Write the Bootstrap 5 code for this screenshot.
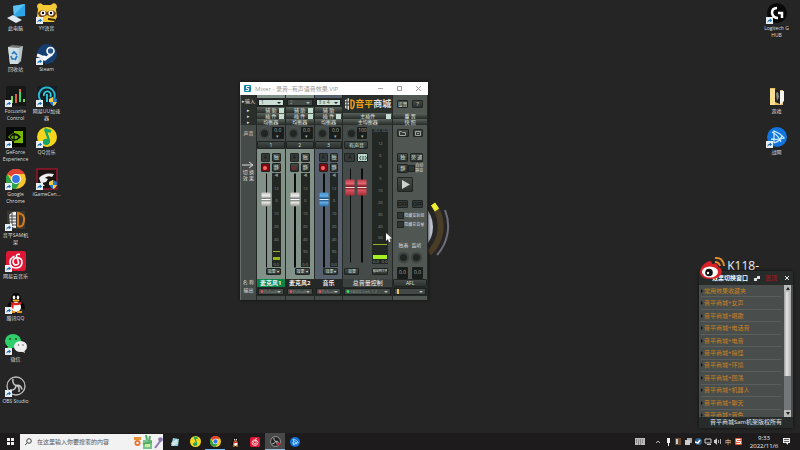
<!DOCTYPE html>
<html>
<head>
<meta charset="utf-8">
<meta name="viewport" content="width=device-width, initial-scale=1">
<title>Desktop</title>
<link href="https://cdn.jsdelivr.net/npm/bootstrap@5.3.0/dist/css/bootstrap.min.css" rel="stylesheet">
<style>
body{background:#252525;color:#ddd;font:5px/6px "Open Sans","Noto Sans CJK SC",sans-serif;height:100vh}
svg{display:block;flex:none}
button,select,input{font:inherit;line-height:inherit;color:inherit;border:0;padding:0;margin:0;border-radius:0;min-width:0}
/* desktop shortcuts */
.shortcuts{display:grid;grid-auto-flow:column;grid-template-rows:repeat(10,1fr);grid-auto-columns:31px;height:416px;padding-top:2px}
.shortcut{color:#e4e4e4;text-decoration:none;text-align:center;display:flex;flex-direction:column;align-items:center;gap:1px;font-size:5px;line-height:7px;width:31px}
.shortcut svg{width:22px;height:22px}
.shortcut span{text-shadow:0 0 1px #000;width:35px;flex:none}
.dial{position:absolute;left:360px;top:183px;width:90px;height:90px}
/* mixer */
.mixer{position:absolute;left:240px;top:82px;width:188px;background:#454b48;box-shadow:0 0 3px #111}
.titlebar{height:13px;background:#fff;color:#999;font-size:6px}
.titlebar button{background:none;width:19px;height:13px;display:flex;justify-content:center;align-items:center}
.rack{display:grid;grid-template-columns:16fr 29fr 29fr 29fr 50fr 35fr;border:solid #686d69;border-width:0 0 0 1px}
.strip{display:flex;flex-direction:column;min-width:0;border-right:1px solid #242927}
.lip{height:3px}.foot{height:4px}
.row-s{height:6px}.row-m{height:8px}.row-l{height:9px}.row-pan{height:16px}.row-logo{height:18px}
.desk{height:130px}
.panrow{display:flex;align-items:center;justify-content:space-between;padding:0 1px 0 2px}
.panrow .readout{width:12px;height:12px}
.green{background:#839289}.blue{background:#56616d}
.fx{background:linear-gradient(#59625b,#262b28);color:#e0e5e1;display:flex;justify-content:center;align-items:center;position:relative;width:100%}
.led{position:absolute;right:1px;width:5px;height:5px;background:#c5dcd1}
.dark{background:#2a2f2c}
.pick{appearance:none;width:100%;height:7px;background:#424946;color:#8d9590;border:1px solid #1d211f;padding-left:2px;display:block;line-height:5px;flex:1}
.pick.lit{background:#cadfd4;color:#34433a}
.pick.out{background:radial-gradient(circle at 3px 50%,#d3555b 1px,transparent 2px),#424946;padding-left:5px;font-size:4px}
.pick.out.on{background:radial-gradient(circle at 3px 50%,#2ee05c 1px,transparent 2px),#424946}
.pick.out.amber{background:linear-gradient(90deg,transparent 2px,#e6c05a 2px,#e6c05a 4px,transparent 4px),#424946}
.pickrow{display:flex;align-items:center;position:relative;padding:0 1px;background:#252a27}
.pickrow::after{content:"";position:absolute;right:4px;border:solid transparent;border-width:2px 2px 0;border-top-color:#b5beb8;pointer-events:none}
.pickrow.litrow::after{border-top-color:#222}
.knob{width:11px;height:11px;border-radius:50%;border:2px solid #3e4441;background:#212523;flex:none;box-shadow:0 0 0 1px #4c5450}
.readout{background:#191d1b;color:#a5aca8;text-align:center;border-radius:1px}
.key{background:linear-gradient(#434946,#2c312e);border:1px solid #202422;color:#dce2de;display:flex;justify-content:center;align-items:center;border-radius:1px;line-height:5px;overflow:hidden;white-space:nowrap}
.key.square{width:11px;flex:none}
.key.off{color:#0d0f0e;background:#343a37}
.key.rec{background:#770d14}
.dot{width:4px;height:4px;border-radius:50%;background:#ff6666}
.dot.dim{background:#762a2c}
.pads{display:grid;grid-template-columns:1fr 1fr;grid-auto-rows:9px;gap:1px 2px}
.fader{width:11px;height:94px;display:flex;justify-content:center;align-items:center;flex:none}
.fader input{appearance:none;-webkit-appearance:none;background:linear-gradient(transparent 5px,#0a0d0b 5px,#0a0d0b 7px,transparent 7px);width:94px;height:11px;flex:none;transform:rotate(-90deg)}
.fader input::-webkit-slider-thumb{-webkit-appearance:none;width:14px;height:9px;border-radius:1px;background:linear-gradient(90deg,#8f8f8c,#e8e8e5 30%,#777 46%,#fff 50%,#777 56%,#eee 75%,#c5c5c2)}
.fader.sky input::-webkit-slider-thumb{background:linear-gradient(90deg,#2c6aa3,#67aee6 30%,#205181 46%,#d9efff 50%,#205181 56%,#62afea 75%,#4a91ca)}
.fader.red input::-webkit-slider-thumb{width:16px;background:linear-gradient(90deg,#a32d39,#d95561 35%,#7d1c26 46%,#ffd8da 50%,#7d1c26 56%,#e36570 75%,#bb3a47)}
.meter{background:#222724;color:#8a938e;display:flex;flex-direction:column;justify-content:space-between;align-items:center;font-size:4px;line-height:5px;position:relative;white-space:nowrap}
.small-key{width:15px;height:7px;align-self:flex-end;font-size:4px}
.name{background:#242826;color:#f4f4f4;display:flex;align-items:center;justify-content:center;font-size:6px;font-weight:700;line-height:7px}
.name.on{background:#078545}
.name.master{background:#3b413e}
.bar{position:absolute;height:1px;background:#93b51c;left:1px;right:1px}
.bar.full{height:4px;background:#a2ef22}
.tick{appearance:none;width:7px;height:7px;background:#303532;border:1px solid #1f2321;flex:none}
/* effects panel */
.effects{position:absolute;right:7px;bottom:22px;width:94px;background:#272c2a;box-shadow:0 0 3px #111}
.effects-head{height:14px;color:#fff;font-size:6px;line-height:14px;padding-left:13px;white-space:nowrap}
.effects-head button{background:none;width:12px;height:14px;display:flex;justify-content:center;align-items:center}
.effect-list{height:132px;overflow:hidden;background:#494e4c}
.effect-items{flex:1;min-width:0;display:flex;flex-direction:column;height:137px}
.effect-items a{display:flex;align-items:center;flex:1;margin:0 3px 0 2px;color:#ce801f;text-decoration:none;border-bottom:1px solid #5a5f5c;font-size:6px;gap:1px;white-space:nowrap}
.effect-items a::before{content:"";border:solid transparent;border-width:2px 0 2px 2px;border-left-color:#111}
.scroller{width:7px;height:132px;background:#73777a;margin-right:2px}
.scroller button{height:7px;background:#b9bcba;display:flex;justify-content:center;align-items:center}
.thumb{height:84px;background:linear-gradient(90deg,#999,#e4e4e4 40%,#aaa)}
.effects-foot{height:11px;line-height:11px;font-size:6px;text-align:center;color:#e6e6e6}
.streamer{position:absolute;right:41px;bottom:177px;color:#f0f0f0;font:12px/14px "Open Sans",sans-serif}
.weibo{position:absolute;left:699px;top:256px;width:27px;height:24px}
.pointer{position:absolute;left:386px;top:233px;width:6px;height:9px}
/* taskbar */
.taskbar{height:17px;background:#1d1b1c}
.taskbar button{background:none;width:20px;height:17px;display:flex;justify-content:center;align-items:center;flex:none}
.taskbar .running{border-bottom:1px solid #76b9ed}
.taskbar .active{background:#484849;border-bottom:1px solid #8bb8dd}
.search{width:143px;height:16px;background:#f2f2f2;color:#555}
.search input{background:none;font-size:6px;outline:0;flex:1;margin-left:1px}
.search input::placeholder{color:#555;opacity:1}
.taskbar .tray button{width:10px}
.clock{font-size:6px;line-height:8px;width:34px;text-align:center;color:#eee}
.tray{margin-right:5px}
.apps{margin-left:2px}
</style>
<script src="https://cdn.jsdelivr.net/npm/bootstrap@5.3.0/dist/js/bootstrap.bundle.min.js"></script>
</head>
<body class="d-flex flex-column overflow-hidden position-relative">
<svg width="0" height="0" class="position-absolute">
<symbol id="go" viewBox="0 0 6 6"><path d="M0 0h6v6H0z" fill="#e9eef2"/><path d="M1.2 5Q1 2.600 3.300 2.300V1.200L5.200 3 3.300 4.600V3.500Q2 3.500 1.200 5" fill="#1669ad"/></symbol>
<symbol id="chrome" viewBox="0 0 20 20"><circle cx="10" cy="10" r="10" fill="#f7c52c"/><path d="M10 10 1.300 5A10 10 0 0 1 18.700 5H10z" fill="#e34335"/><path d="M1.300 5A10 10 0 0 0 10 20l4.300-7.500L10 10 5.700 12.500z" fill="#2ba24c"/><circle cx="10" cy="10" r="5" fill="#fff"/><circle cx="10" cy="10" r="3.900" fill="#3478e5"/></symbol>
<symbol id="qqmusic" viewBox="0 0 20 20"><circle cx="10" cy="10" r="10" fill="#f7d51c"/><path d="M8 1 14.500 3l-1 3-3-1 2.500 8c1 5-4 6-6.500 4s0-6 4-5L7 3z" fill="#16a568"/></symbol>
<symbol id="penguin" viewBox="0 0 20 20"><path d="M3 16Q0 18 2 11L5 8Q5 0 10 0t5 8l3 3q2 7-1 5l-2-1q-5 6-10 0" fill="#080808"/><ellipse cx="10" cy="14" rx="5" ry="5" fill="#fff"/><ellipse cx="8" cy="4.500" rx="1.300" ry="1.900" fill="#fff"/><ellipse cx="12" cy="4.500" rx="1.300" ry="1.900" fill="#fff"/><ellipse cx="10" cy="7.600" rx="3.500" ry="1.200" fill="#f6a61a"/><path d="M4.500 8.500q5.500 3 11 0v2.500Q11 13 7.500 12v3.500H5.300V11z" fill="#de201f"/><path d="M4 18h5v2H4zM11 18h5v2h-5z" fill="#e9961b"/></symbol>
<symbol id="netease" viewBox="0 0 20 20"><rect width="20" height="20" rx="3" fill="#dd1734"/><path d="M8.500 5.300Q4 7 4 11.500 4.500 17 10 17q6-.5 6-6 0-4-5-4.500-4 .6-4 4.500.5 3 3 3 3-.3 2.500-3L10.500 5q0-2.500 3.500-1.500" fill="none" stroke="#fff" stroke-width="1.600"/></symbol>
<symbol id="obs" viewBox="0 0 20 20"><circle cx="10" cy="10" r="9" fill="#242325" stroke="#bcbcbc" stroke-width="1.300"/><path d="M7 3q-1 5 3 6.500 5-1 6 4M10 9.500q-.5 5-6 4.500M10 9.500Q14 10 13 16" fill="none" stroke="#c9c9c9" stroke-width="1.500"/></symbol>
<symbol id="battle" viewBox="0 0 20 20"><circle cx="10" cy="10" r="10" fill="#1274dc"/><path d="M7 16V4q6 2 10 7-5 2-13 1M5 5q7 4 9 10M7 16q6-2 8-7" fill="none" stroke="#c7edff" stroke-width="1.300"/></symbol>
</svg>

<main class="flex-fill d-flex justify-content-between">
<nav class="shortcuts" aria-label="Shortcuts">
<a class="shortcut" href="#"><svg viewBox="0 0 22 22"><path d="M8 4 20 2v12L9 15z" fill="#2ca6e9"/><path d="M8 4 20 2 9 13z" fill="#5cc0f3"/><path d="m2 16 6-3 9 5-6 3z" fill="#dce9f0"/></svg><span>此电脑</span></a>
<a class="shortcut" href="#"><svg viewBox="0 0 22 22"><path d="m3 4 15-1-2 15-3 3H5z" fill="#b7c5c9"/><path d="m3 4 11 1-1 16H5z" fill="#cfdce0"/><path d="m3 4 4-2 11 1-4 2z" fill="#777"/><path d="m7 11 2-2 3 3M6 13l1 3h4M12 13l-2 4" fill="none" stroke="#227cc8" stroke-width="1.700"/></svg><span>回收站</span></a>
<a class="shortcut" href="#"><svg viewBox="0 0 22 22"><path d="M1 1h20v20H1z" fill="#151817"/><path d="M7 11v7M19 14v3" stroke="#7ed04a" stroke-width="2"/><path d="M11 9v9" stroke="#e0603a" stroke-width="2"/><path d="M15 4v13" stroke="#3ad66f" stroke-width="2"/><path d="M15 4v3" stroke="#e26835" stroke-width="2"/><use href="#go" y="15" width="7" height="7"/></svg><span>Focusrite<br>Control</span></a>
<a class="shortcut" href="#"><svg viewBox="0 0 22 22"><path d="M1 1h20v20H1z" fill="#080b05"/><path d="M3 11q7-8 15-2v8H9V5h9v12q-8 1-15-6" fill="#76b900"/><path d="M5 11q5-6 10 0-6 6-10 0m4-4v7q4 0 5-3-2-3-5-2" fill="none" stroke="#0b1005" stroke-width="1.300"/><use href="#go" y="15" width="7" height="7"/></svg><span>GeForce<br>Experience</span></a>
<a class="shortcut" href="#"><svg viewBox="0 0 22 22"><use href="#chrome" x="1" y="1" width="20" height="20"/><use href="#go" y="15" width="7" height="7"/></svg><span>Google<br>Chrome</span></a>
<a class="shortcut" href="#"><svg viewBox="0 0 22 22"><path d="M2 2h18v18H2z" fill="#39352f"/><path d="M4 6q4-4 7-3v16q-5 0-6-4" fill="#eee"/><path d="M4 7h7M4 10h7M4 13h7M5 16h6M7 4v13" stroke="#444"/><path d="M13 4q7 1 6 8t-6 5z" fill="none" stroke="#d07a1d" stroke-width="2"/><use href="#go" y="15" width="7" height="7"/></svg><span>音平SAM机<br>架</span></a>
<a class="shortcut" href="#"><svg viewBox="0 0 22 22"><use href="#netease" x="1" y="1" width="20" height="20"/><use href="#go" y="15" width="7" height="7"/></svg><span>网易云音乐</span></a>
<a class="shortcut" href="#"><svg viewBox="0 0 22 22"><use href="#penguin" x="1" y="1" width="20" height="20"/><use href="#go" y="15" width="7" height="7"/></svg><span>腾讯QQ</span></a>
<a class="shortcut" href="#"><svg viewBox="0 0 22 22"><ellipse cx="8" cy="8" rx="8" ry="7" fill="#2fd06c"/><path d="m3 13-1 4 6-3" fill="#2fd06c"/><ellipse cx="15.500" cy="13.500" rx="6.500" ry="5.500" fill="#eee"/><path d="m19 17 1 3-4-2" fill="#eee"/><circle cx="5" cy="6" r="1" fill="#154f2d"/><circle cx="11" cy="6" r="1" fill="#154f2d"/><circle cx="13.500" cy="12" r=".8" fill="#666"/><circle cx="18" cy="12" r=".8" fill="#666"/><use href="#go" y="15" width="7" height="7"/></svg><span>微信</span></a>
<a class="shortcut" href="#"><svg viewBox="0 0 22 22"><use href="#obs" x="1" y="1" width="20" height="20"/><use href="#go" y="15" width="7" height="7"/></svg><span>OBS Studio</span></a>
<a class="shortcut" href="#"><svg viewBox="0 0 22 22"><path d="M2 2q3-2 5 1h8q2-3 5-1 2 3 0 5l1 8-3 5H4l-3-5 1-8Q0 4 2 2" fill="#f4c936"/><path d="M2 11q3-5 9-1 6-4 9 1-1 5-5 4l-4-2-4 2q-4 1-5-4" fill="#70401a"/><circle cx="7" cy="11" r="2.600" fill="#fff"/><circle cx="15" cy="11" r="2.600" fill="#fff"/><circle cx="7" cy="11" r="1.200"/><circle cx="15" cy="11" r="1.200"/><path d="m12 17 7 1" stroke="#33200c" stroke-width="2"/><use href="#go" y="15" width="7" height="7"/></svg><span>YY语音</span></a>
<a class="shortcut" href="#"><svg viewBox="0 0 22 22"><circle cx="11" cy="11" r="10" fill="#143f70"/><path d="M1 12q6 2 8 4l7-5" stroke="#f2f5f7" stroke-width="3" fill="none"/><circle cx="14.500" cy="8" r="3.500" fill="#285584" stroke="#fff" stroke-width="1.600"/><circle cx="8" cy="15" r="2.500" fill="#fff"/><use href="#go" y="15" width="7" height="7"/></svg><span>Steam</span></a>
<a class="shortcut" href="#"><svg viewBox="0 0 22 22"><path d="M1 1h20v20H1z" fill="#151d25"/><path d="M5 16a8 8 0 1 1 13-2" fill="none" stroke="#26b9cf" stroke-width="2"/><path d="M8 11a3.500 3.500 0 1 1 6 1M11 9v8" fill="none" stroke="#31cddb" stroke-width="1.800"/><path d="m17 12 4 2q0 5-4 7-4-2-4-7z" fill="#257acb"/><path d="M17 12v5h4q-1 3-4 4v-4h-4v-3z" fill="#f6cc48"/><use href="#go" y="15" width="7" height="7"/></svg><span>网易UU加速<br>器</span></a>
<a class="shortcut" href="#"><svg viewBox="0 0 22 22"><use href="#qqmusic" x="1" y="1" width="20" height="20"/><use href="#go" y="15" width="7" height="7"/></svg><span>QQ音乐</span></a>
<a class="shortcut" href="#"><svg viewBox="0 0 22 22"><path d="M1 1h20v20H1z" fill="#191313" stroke="#96172b" stroke-width="1.500"/><path d="M3 10q5-6 15-4l-2 3q-4-2-7 1l3 1-2 3-4 1 3 3H6z" fill="#eee"/><path d="m17 12 4 2q0 5-4 7-4-2-4-7z" fill="#257acb"/><path d="M17 12v5h4q-1 3-4 4v-4h-4v-3z" fill="#f6cc48"/><use href="#go" y="15" width="7" height="7"/></svg><span>iGameCen...</span></a>
</nav>
<nav class="shortcuts me-2" aria-label="More shortcuts">
<a class="shortcut" href="#"><svg viewBox="0 0 22 22"><circle cx="11" cy="11" r="10" fill="#090909"/><path d="M11 6q-5 0-5 5 1 5 6 5M12 11h4v5" fill="none" stroke="#fff" stroke-width="2.500"/><use href="#go" y="15" width="7" height="7"/></svg><span>Logitech G<br>HUB</span></a>
<span></span>
<a class="shortcut" href="#"><svg viewBox="0 0 22 22"><path d="M4 3h5l1 2h7v15H4z" fill="#e5bd59"/><path d="m9 4 5 1v14l-5-2z" fill="#222"/><path d="M14 6h4v10l-4 4z" fill="#f4f4ef"/><path d="M4 4h5v16H4z" fill="#f9df91"/><path d="m10 8 2-1 1 5-2 4" fill="#888"/></svg><span>游戏</span></a>
<a class="shortcut" href="#"><svg viewBox="0 0 22 22"><use href="#battle" x="1" y="1" width="20" height="20"/><use href="#go" y="15" width="7" height="7"/></svg><span>战网</span></a>
</nav>
</main>

<svg class="dial" viewBox="0 0 90 90" fill="none"><circle cx="44" cy="44" r="29" fill="#bfc4d0"/><path d="M75 24A36 36 0 0 1 69 70" stroke="#4a3d27" stroke-width="6"/><path d="m73 21 4 6" stroke="#eff02f" stroke-width="5"/><path d="M85 27A43 43 0 0 1 77 72" stroke="#6f6e76" stroke-width="2"/></svg>

<section class="mixer" aria-label="Mixer">
<header class="titlebar d-flex align-items-center ps-1">
<svg width="7" height="7" viewBox="0 0 7 7"><rect width="7" height="7" rx="1" fill="#1681a7"/><path d="M5.500 1.500h-3v2h2v2h-3" fill="none" stroke="#fff"/></svg>
<span class="ms-1 me-auto text-nowrap">Mixer - 录音--有声语音效果.VIP</span>
<button aria-label="Minimize"><svg width="5" height="5"><path d="M0 2.500h5" stroke="#aaa"/></svg></button>
<button aria-label="Maximize"><svg width="5" height="5"><path d="M.5.5h4v4h-4z" fill="none" stroke="#999"/></svg></button>
<button aria-label="Close"><svg width="5" height="5"><path d="m0 0 5 5m0-5L0 5" stroke="#999"/></svg></button>
</header>
<div class="rack">
<div class="strip text-center">
<div class="lip dark"></div><div class="row-l dark">▸输入</div><div class="row-s dark">▸</div><div class="row-s dark">▸</div><div class="row-s dark">▸</div>
<div class="row-pan d-flex align-items-center justify-content-center">声音</div><div class="row-m"></div>
<div class="desk d-flex flex-column align-items-center pt-2"><svg class="mt-1" width="13" height="8" viewBox="0 0 13 8"><path d="M0 4h11M7 1l4 3-4 3" fill="none" stroke="#ddd"/></svg><span>切 换</span><span>效 果</span></div>
<div class="row-m">名 称</div><div class="row-l">输出</div><div class="foot"></div>
</div>

<div class="strip">
<div class="lip green"></div><div class="row-l pickrow litrow"><select class="pick lit" aria-label="Input 1"><option>1</option></select></div>
<button class="row-s fx">辅 助<i class="led"></i></button><button class="row-s fx">插 件<i class="led"></i></button><button class="row-s fx">均衡器</button>
<div class="row-pan panrow"><i class="knob"></i><div class="readout">0.0<br>▾</div></div>
<button class="row-m key">1</button>
<div class="desk green p-1 pt-0 d-flex flex-column"><div class="pads pt-1"><button class="key off">A</button><button class="key">独</button><button class="key rec"><i class="dot"></i></button><button class="key">静</button></div>
<div class="d-flex justify-content-between my-auto"><div class="fader"><input type="range" value="76" aria-label="Mic 1 level"></div><div class="meter w-50"><b>◀</b><span>12</span><span>0</span><span>10</span><span>20</span><span>40</span><span>&nbsp;</span><span>0.0</span><i class="bar" style="bottom:15px"></i><i class="bar" style="bottom:7px;height:3px"></i></div></div>
<button class="key small-key">效果 ▾</button></div>
<div class="row-m name on">麦克风1</div><div class="row-l pickrow"><select class="pick out" aria-label="Output 1"><option>Default</option></select></div><div class="foot"></div>
</div>

<div class="strip">
<div class="lip green"></div><div class="row-l pickrow"><select class="pick" aria-label="Input 2"><option>2</option></select></div>
<button class="row-s fx">辅 助<i class="led"></i></button><button class="row-s fx">插 件<i class="led"></i></button><button class="row-s fx">均衡器</button>
<div class="row-pan panrow"><i class="knob"></i><div class="readout">0.0<br>▾</div></div>
<button class="row-m key">2</button>
<div class="desk green p-1 pt-0 d-flex flex-column"><div class="pads pt-1"><button class="key off">A</button><button class="key">独</button><button class="key"><i class="dot dim"></i></button><button class="key">静</button></div>
<div class="d-flex justify-content-between my-auto"><div class="fader"><input type="range" value="76" aria-label="Mic 2 level"></div><div class="meter w-50"><b>◀</b><span>12</span><span>0</span><span>10</span><span>20</span><span>40</span><span>90</span><span>0.0</span></div></div>
<button class="key small-key">效果 ▾</button></div>
<div class="row-m name">麦克风2</div><div class="row-l pickrow"><select class="pick out" aria-label="Output 2"><option>Default</option></select></div><div class="foot"></div>
</div>

<div class="strip">
<div class="lip blue"></div><div class="row-l pickrow litrow"><select class="pick lit" aria-label="Input 3"><option>3 x 4</option></select></div>
<button class="row-s fx">辅 助</button><button class="row-s fx">插 件<i class="led"></i></button><button class="row-s fx">均衡器</button>
<div class="row-pan panrow"><i class="knob"></i><div class="readout">0.0<br>▾</div></div>
<button class="row-m key">3</button>
<div class="desk blue p-1 pt-0 d-flex flex-column"><div class="pads pt-1"><button class="key off">A</button><button class="key">独</button><button class="key rec"><i class="dot"></i></button><button class="key">静</button></div>
<div class="d-flex justify-content-between my-auto"><div class="fader sky"><input type="range" value="76" aria-label="Music level"></div><div class="meter w-50"><b>◀</b><span>12</span><span>0</span><span>10</span><span>20</span><span>40</span><span>90</span><span>0.0</span></div></div>
<button class="key small-key">效果 ▾</button></div>
<div class="row-m name">音乐</div><div class="row-l pickrow"><select class="pick out" aria-label="Output 3"><option>Default</option></select></div><div class="foot"></div>
</div>

<div class="strip">
<div class="row-logo dark d-flex align-items-center justify-content-center" style="font-size:9px;font-weight:700"><svg width="11" height="12" viewBox="0 0 11 12"><path d="M5 0v12L1 10V2z" fill="#ddd"/><path d="M1 4h4M1 7h4M3 1v10" stroke="#333"/><path d="M7 2q4 0 3 5T7 10z" fill="none" stroke="#ed971c" stroke-width="1.500"/></svg><span style="color:#f3a313">音平</span><span>商城</span></div>
<button class="row-s fx">主插件<i class="led"></i></button><button class="row-s fx">主均衡器</button>
<div class="d-flex" style="height:154px">
<div class="d-flex flex-column" style="width:26px;padding-left:1px">
<div class="row-pan panrow"><i class="knob"></i><div class="readout" style="width:10px">100<br>▾</div></div>
<button class="row-m key">有声音</button>
<div class="pads pt-1"><button class="key off">A</button><button class="key" aria-label="Link" style="background:#bad5ca"><svg width="8" height="6" viewBox="0 0 8 6"><path d="m2 1-1.500 2L2 5m4-4 1.500 2L6 5M4 1v4" fill="none" stroke="#36483f"/></svg></button></div>
<div class="d-flex justify-content-around my-auto"><div class="fader red"><input type="range" value="86" aria-label="Master left"></div><div class="fader red"><input type="range" value="86" aria-label="Master right"></div></div>
<button class="key small-key align-self-start mb-1">效果</button></div>
<div class="flex-fill d-flex flex-column px-1" style="min-width:0"><div class="meter flex-fill my-1"><span style="font-size:3px">-50.2 -50.2</span><span>12</span><span>6</span><span>0</span><span>5</span><span>10</span><span>20</span><span>30</span><span>40</span><span>50</span><span>&nbsp;</span><span>0.0 &nbsp; 0.0</span><i class="bar" style="bottom:19px"></i><i class="bar full" style="bottom:5px"></i></div><button class="key mb-1" style="font-size:3px;height:7px">输出到文件</button></div>
</div>
<div class="row-m name master fw-normal">总音量控制</div><div class="row-l pickrow"><select class="pick out on" aria-label="Master output"><option>FASIO.Link 1-2</option></select></div><div class="foot"></div>
</div>

<div class="strip" style="background:#505753">
<div class="row-logo d-flex gap-1 align-items-center px-1"><button class="key row-m w-50">设置</button><button class="key row-m w-50">?</button></div>
<button class="row-s fx">重 置</button><button class="row-s fx">快 照</button>
<div class="row-pan d-flex gap-1 px-1 pt-0 align-items-center"><button class="key row-m flex-fill" aria-label="Open"><svg width="7" height="5"><path d="M.5 4.500v-4h2l1 1h3v3z" fill="none" stroke="#9da59f"/></svg></button><button class="key row-m flex-fill" aria-label="Save"><svg width="6" height="5"><path d="M.5.500h5v4h-5zM2 2.500h2" fill="none" stroke="#9da59f"/></svg></button></div>
<div class="row-m"></div>
<div class="desk px-1 d-flex flex-column">
<div class="d-flex mt-1" style="gap:2px"><button class="key row-l square">独</button><button class="key row-l flex-fill">旁 通</button></div>
<div class="d-flex align-items-center" style="margin-top:1px"><button class="key row-l square">静</button><input id="lockall" class="tick" type="checkbox"><label for="lockall" class="text-nowrap" style="font-size:4px;line-height:5px">自动<br>静音</label></div>
<button class="key mt-1" aria-label="Play" style="width:16px;height:15px"><svg width="9" height="9"><path d="m1 0 8 4.500L1 9z" fill="#ccd2ce"/></svg></button>
<div class="d-flex gap-1 mt-2"><button class="key row-m flex-fill off">OFF</button><button class="key row-m flex-fill off">OFF</button></div>
<div class="d-flex align-items-center mt-1 text-nowrap"><input id="hidetracks" class="tick" type="checkbox"><label for="hidetracks" style="font-size:4px">隐藏音轨组</label></div>
<div class="d-flex align-items-center text-nowrap" style="margin-top:2px"><input id="hidemaster" class="tick" type="checkbox"><label for="hidemaster" style="font-size:4px">隐藏总音量</label></div>
<div class="d-flex justify-content-around mt-auto"><span>独奏</span><span>监听</span></div>
<div class="d-flex justify-content-around my-1"><i class="knob"></i><i class="knob"></i></div>
<div class="d-flex gap-1"><div class="readout flex-fill" style="height:12px;line-height:10px">0.0</div><div class="readout flex-fill" style="height:12px;line-height:10px">0.0</div></div>
</div>
<button class="row-m key">AFL</button><div class="row-l pickrow"><select class="pick out amber" aria-label="AFL output"><option>&nbsp;</option></select></div><div class="foot"></div>
</div>
</div>
</section>

<div class="streamer">K118-</div>
<section class="effects" aria-label="Effects">
<header class="effects-head d-flex"><b>效果切换窗口</b><svg class="ms-auto mt-1" width="8" height="7"><path d="M1 3h3v3H1zM4 1h3v3H4z" fill="#dde3df"/></svg><span class="mx-1" style="color:#b90e17">置顶</span><button aria-label="Close effects"><svg width="6" height="6"><path d="m1 1 4 4m0-4L1 5" stroke="#eee"/></svg></button></header>
<div class="effect-list d-flex align-items-start"><nav class="effect-items"><a href="#">常用效果收藏夹</a><a href="#">音平商城+女声</a><a href="#">音平商城+唱歌</a><a href="#">音平商城+电话音</a><a href="#">音平商城+电音</a><a href="#">音平商城+搞怪</a><a href="#">音平商城+环境</a><a href="#">音平商城+回荡</a><a href="#">音平商城+机器人</a><a href="#">音平商城+聊天</a><a href="#">音平商城+音色</a></nav>
<div class="scroller d-flex flex-column"><button aria-label="Scroll up"><svg width="4" height="3"><path d="M0 3 2 0l2 3" fill="#222"/></svg></button><div class="thumb"></div><button class="mt-auto" aria-label="Scroll down"><svg width="4" height="3"><path d="m0 0 2 3 2-3" fill="#222"/></svg></button></div></div>
<footer class="effects-foot">音平商城Sam机架版权所有</footer>
</section>
<svg class="weibo" viewBox="0 0 27 24"><path d="M16 2q8-1 9 8M16 6q4 0 5 4" fill="none" stroke="#e78b2a" stroke-width="2"/><path d="M1 17Q1 10 8 6q5-3 5 2 6-2 6 3 4 1 4 5-2 7-11 7-10 0-11-6" fill="#da2027"/><ellipse cx="11" cy="16" rx="8" ry="5.500" fill="#fff"/><circle cx="10" cy="16.500" r="3.800" fill="#111"/><circle cx="9" cy="17" r="1.200" fill="#fff"/></svg>
<svg class="pointer" viewBox="0 0 6 9"><path d="M0 0v8l2-2 1 3 1.500-.5L3.500 5.500H6z" fill="#fff"/></svg>

<footer class="taskbar d-flex align-items-center">
<button aria-label="Start"><svg width="7" height="7"><path d="M0 0h3v3H0zm4 0h3v3H4zM0 4h3v3H0zm4 0h3v3H4z" fill="#eee"/></svg></button>
<label class="search d-flex align-items-center ps-1 gap-1"><svg width="8" height="8"><circle cx="5" cy="3" r="2.300" fill="none" stroke="#444"/><path d="M3.400 4.600 1 7" stroke="#444"/></svg><input aria-label="Search" placeholder="在这里输入你要搜索的内容">
<svg width="30" height="14" viewBox="0 0 30 14"><path d="M1 2h7v3H1z" fill="#e59435"/><circle cx="4.500" cy="8" r="3" fill="#e7702c"/><circle cx="4.500" cy="8" r="1.200" fill="#fff"/><path d="M10 5h9v9h-9z" fill="#77c58b"/><path d="m13 0 1 5M17 1l-1 5M10 9l9-2" stroke="#55aa63" stroke-width="2"/><path d="M12 9h5v3h-5z" fill="#cdeb9c"/><path d="m22 13 6-8" stroke="#8e7db4" stroke-width="2"/><circle cx="27.500" cy="4.500" r="2.300" fill="#8b79b0"/></svg></label>
<div class="apps d-flex">
<button aria-label="Notes"><svg width="10" height="10"><path d="m3 1 6 1-1 7H1z" fill="#8fd0dc"/><path d="m1 6 6-4 1 4-5 3" fill="#d3e4e3"/></svg></button>
<button aria-label="QQ Music"><svg width="11" height="11"><use href="#qqmusic" width="11" height="11"/></svg></button>
<button class="running" aria-label="Chrome"><svg width="11" height="11"><use href="#chrome" width="11" height="11"/></svg></button>
<button aria-label="QQ"><svg width="9" height="10"><use href="#penguin" width="9" height="10"/></svg></button>
<button aria-label="NetEase Music"><svg width="10" height="10"><use href="#netease" width="10" height="10"/></svg></button>
<button class="active" aria-label="OBS"><svg width="11" height="11"><use href="#obs" width="11" height="11"/><circle cx="9" cy="8" r="1.500" fill="#cc1c32"/></svg></button>
<button aria-label="Battle.net"><svg width="10" height="10"><use href="#battle" width="10" height="10"/></svg></button>
</div>
<div class="tray d-flex ms-auto align-items-center">
<button class="me-2" aria-label="Keyboard"><svg width="10" height="7"><path d="M0 0h10v7H0z" fill="#bbb"/><path d="M1 2h8M1 4h8M3 6h4" stroke="#555" stroke-dasharray="1"/></svg></button>
<button aria-label="Show hidden"><svg width="6" height="4"><path d="m1 3 2-2 2 2" fill="none" stroke="#bbb"/></svg></button>
<button aria-label="Microphone"><svg width="5" height="8"><path d="M1 0h3v5H1zM2 5h1v3H2z" fill="#eee"/></svg></button>
<button aria-label="Mixer"><svg width="6" height="7"><path d="M0 0h6v7H0z" fill="#6b4930"/><path d="M1 1h2v5H1z" fill="#ccc"/></svg></button>
<button aria-label="Windows"><svg width="7" height="7"><path d="M2 0h5v5H2z" fill="#aaa"/><path d="M0 2h5v5H0z" fill="#ccc"/></svg></button>
<button aria-label="Steam"><svg width="7" height="7"><circle cx="3.500" cy="3.500" r="3.500" fill="#27618d"/><path d="m0 4 3 1 2-3" fill="none" stroke="#fff" stroke-width="1.500"/></svg></button>
<button aria-label="Network"><svg width="8" height="7"><path d="M1 1h6v4H1zM3 6.500h4" fill="none" stroke="#ccc"/></svg></button>
<button aria-label="Volume"><svg width="8" height="7"><path d="M0 2h1l2-2v7L1 5H0z" fill="#ccc"/><path d="M4.500 2v3M6.500 1v5" stroke="#aaa"/></svg></button>
<button aria-label="Input language" style="font-size:6px">中</button>
<button aria-label="Sogou"><svg width="7" height="7"><rect width="7" height="7" rx="1" fill="#ec542e"/><path d="M5.500 1.500h-4v2h4v2h-4" fill="none" stroke="#fff"/></svg></button>
<div class="clock ms-1">9:33<br>2022/11/6</div>
<button class="me-1" aria-label="Notifications"><svg width="7" height="7"><path d="M0 0h7v5H5v2L3 5H0z" fill="#eee"/><path d="M1 1.500h5M1 3.500h5" stroke="#666"/></svg></button>
</div>
</footer>
</body>
</html>
